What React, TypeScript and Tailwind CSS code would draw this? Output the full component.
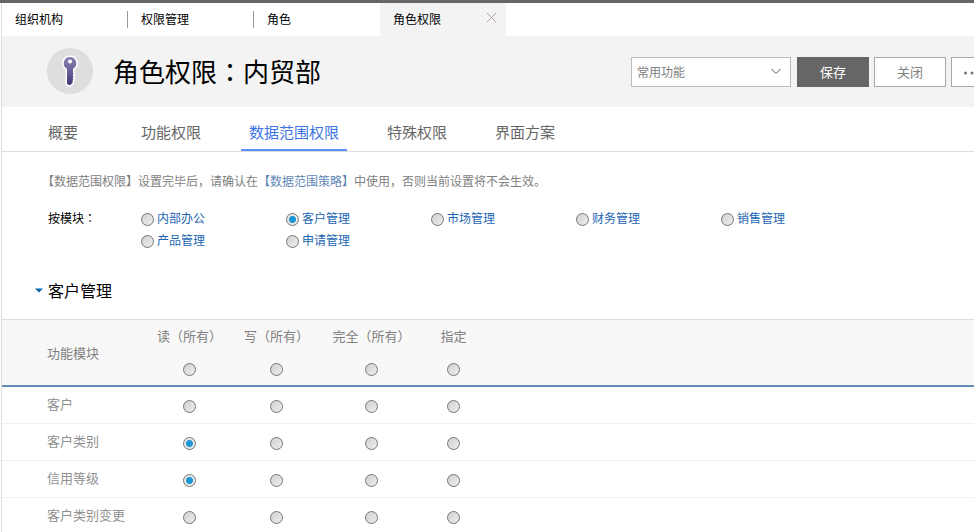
import React from "react";

const openTabs = ["组织机构", "权限管理", "角色"];
const sections = ["概要", "功能权限", "数据范围权限", "特殊权限", "界面方案"];
const modules = ["内部办公", "客户管理", "市场管理", "财务管理", "销售管理", "产品管理", "申请管理"];
const levels = ["读（所有）", "写（所有）", "完全（所有）", "指定"];
const rows = [
  { name: "客户", level: -1 },
  { name: "客户类别", level: 0 },
  { name: "信用等级", level: 0 },
  { name: "客户类别变更", level: -1 },
];

/* Full-width colon centred in its cell */
function Colon() {
  return <span className="font-['Noto_Sans_CJK_TC',sans-serif]">：</span>;
}

function Radio(props: React.InputHTMLAttributes<HTMLInputElement>) {
  return (
    <input
      type="radio"
      className="block size-[13px] shrink-0 appearance-none rounded-full border border-[#757575] bg-linear-to-br from-[#d0d0d0] to-[#eeeeee] checked:bg-[radial-gradient(circle,#1b95d3_3px,#e8e8e8_4px)]"
      {...props}
    />
  );
}

function KeyBadge() {
  return (
    <svg className="size-[46px] shrink-0" viewBox="0 0 46 46" aria-hidden="true">
      <defs>
        <linearGradient id="key" x1="0" y1="0" x2="0" y2="1">
          <stop offset="0" stopColor="#8580ae" />
          <stop offset="0.5" stopColor="#68619a" />
          <stop offset="1" stopColor="#403777" />
        </linearGradient>
      </defs>
      <circle cx="23" cy="23" r="23" fill="#dedede" />
      <path
        d="M23 9a6.300 6.300 0 0 0-3 11.800V34.500a2.500 2.500 0 0 0 2.500 2.500h.8l2.300-2.300v-2.200l.8-1-.8-1 1-1.500-1-1.500 1-1.300-.6-1V20.800A6.300 6.300 0 0 0 23 9Z"
        fill="url(#key)"
        stroke="#fff"
        strokeWidth="3.200"
        paintOrder="stroke"
        strokeLinejoin="round"
      />
      <circle cx="23" cy="13.500" r="2" fill="#fff" />
    </svg>
  );
}

export default function App() {
  return (
    <div className="h-screen overflow-hidden border-t-[3px] border-[#666] bg-white pl-px font-['Noto_Sans_CJK_SC',sans-serif] text-xs text-black">
      <div className="h-full border-l border-[#dcdcdc]">
        <nav className="flex h-[33px] items-center" aria-label="页签">
          {openTabs.map((t, i) => (
            <a
              key={t}
              href="#"
              className={`w-[126px] border-r pb-0.5 pl-[13px] leading-[15px] ${i < 2 ? "border-[#999]" : "border-transparent"}`}
            >
              {t}
            </a>
          ))}
          <div className="flex h-full w-[126px] items-center justify-between bg-[#f3f3f3] pr-[9px] pb-0.5 pl-[13px]">
            <a href="#">角色权限</a>
            <button type="button" aria-label="关闭页签" className="pb-0.5">
              <svg className="size-[11px]" viewBox="0 0 11 11" stroke="#b5a69d" fill="none">
                <path d="M1 1 10 10M10 1 1 10" />
              </svg>
            </button>
          </div>
        </nav>

        <header className="flex h-[71px] items-start bg-[#f3f3f3] pt-3 pl-[45px]">
          <KeyBadge />
          <h1 className="ml-5 grow text-[26px] leading-[46px] whitespace-nowrap">
            角色权限<Colon />内贸部
          </h1>
          <div className="mt-[9px] flex h-[30px] shrink-0 gap-[5px] text-[#808080]">
            <div className="relative mr-px">
              <select
                aria-label="常用功能"
                className="h-full w-40 appearance-none border border-[#bcbcbc] bg-white pl-[5px]"
              >
                <option>常用功能</option>
              </select>
              <svg
                className="pointer-events-none absolute top-[11px] right-2.5 h-[7px] w-[10px]"
                viewBox="0 0 10 7"
                fill="none"
                stroke="#555"
              >
                <path d="M0.500 1 5 5.500 9.500 1" />
              </svg>
            </div>
            <button type="button" className="w-[72px] bg-[#666] text-[13px] text-white">保存</button>
            <button type="button" className="w-[72px] border border-[#a8a8a8] bg-white text-[13px]">关闭</button>
            <button
              type="button"
              aria-label="更多"
              className="-mr-[19px] flex w-[42px] items-center justify-center border border-[#a8a8a8] bg-white pt-0.5"
            >
              <svg className="h-1 w-4" viewBox="0 0 16 4" fill="#777">
                <circle cx="1.500" cy="2" r="1.500" />
                <circle cx="8" cy="2" r="1.500" />
                <circle cx="14.500" cy="2" r="1.500" />
              </svg>
            </button>
          </div>
        </header>

        <nav className="flex h-[45px] items-end gap-8 border-b border-[#dcdcdc] pl-[38px] text-[15px] text-[#666]" aria-label="权限">
          {sections.map((s, i) => (
            <a
              key={s}
              href="#"
              className={`h-[34px] min-w-[61px] border-b-2 px-2 leading-[30px] ${
                i === 2 ? "border-[#5b8ff9] text-[#3c74e6]" : "border-transparent"
              }`}
            >
              {s}
            </a>
          ))}
        </nav>

        <main>
          <p className="mt-5 pl-10 leading-[18px] text-[#808080]">
            【数据范围权限】设置完毕后，请确认在
            <a href="#" className="text-[#5f88b5]">【数据范围策略】</a>
            中使用，否则当前设置将不会生效。
          </p>

          <fieldset className="mt-[18px] flex pl-[46px]">
            <legend className="float-left w-[93px] leading-5">
              按模块<Colon />
            </legend>
            <div className="grid grow grid-cols-[repeat(auto-fill,145px)] text-[#1c66b3]">
              {modules.map((m, i) => (
                <label key={m} className="flex h-[22px] items-center gap-[3px]">
                  <Radio name="module" defaultChecked={i === 1} />
                  <span className="pb-0.5 leading-5">{m}</span>
                </label>
              ))}
            </div>
          </fieldset>

          <h2 className="mt-[26px] mb-[17px] text-base leading-6">
            <button type="button" className="flex items-center gap-[5px] pl-[33px]" aria-expanded="true">
              <svg className="h-[5px] w-2" viewBox="0 0 8 5" fill="#0b62a4">
                <path d="M0 .5H8L4 4.500Z" />
              </svg>
              客户管理
            </button>
          </h2>

          <table className="w-full table-fixed border-separate border-spacing-0 text-[13px] text-[#909090]">
            <colgroup>
              <col className="w-36" />
              <col className="w-[87px]" />
              <col className="w-[87px]" />
              <col className="w-[103px]" />
              <col className="w-[61px]" />
              <col />
            </colgroup>
            <thead>
              <tr className="h-[68px] bg-[#f8f8f8] text-[#808080] [&>*]:border-t [&>*]:border-b-2 [&>*]:border-t-[#dedede] [&>*]:border-b-[#628cb5]">
                <th className="pl-[45px] text-left font-normal">功能模块</th>
                {levels.map((l) => (
                  <th key={l} className="pb-1 font-normal whitespace-nowrap">
                    <label className="flex flex-col items-center gap-[17px] leading-5">
                      {l}
                      <Radio name="all" />
                    </label>
                  </th>
                ))}
                <td />
              </tr>
            </thead>
            <tbody>
              {rows.map((r) => (
                <tr key={r.name} className="h-[37px] [&>*]:border-b [&>*]:border-[#f0f0f0]">
                  <th scope="row" className="pb-0.5 pl-[45px] text-left leading-5 font-normal">{r.name}</th>
                  {levels.map((l, i) => (
                    <td key={l} className="pt-[3px]">
                      <div className="flex justify-center">
                        <Radio name={r.name} aria-label={`${r.name} ${l}`} defaultChecked={r.level === i} />
                      </div>
                    </td>
                  ))}
                  <td />
                </tr>
              ))}
            </tbody>
          </table>
        </main>
      </div>
    </div>
  );
}
